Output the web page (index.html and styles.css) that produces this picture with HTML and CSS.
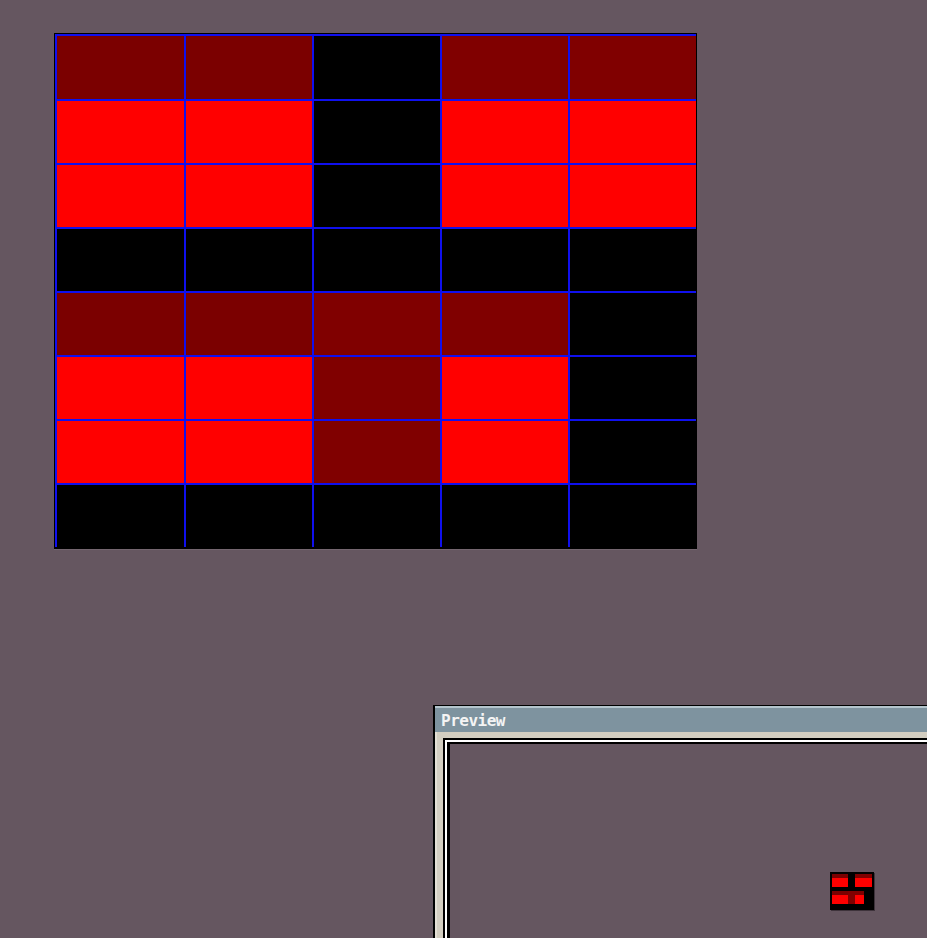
FILE: index.html
```html
<!DOCTYPE html>
<html>
<head>
<meta charset="utf-8">
<title>Grid editor</title>
<link rel="stylesheet" href="styles.css">
</head>
<body>
<div class="board">
  <div class="grid">
    <div class="c d"></div><div class="c d"></div><div class="c k"></div><div class="c m"></div><div class="c m"></div>
    <div class="c r"></div><div class="c r"></div><div class="c k"></div><div class="c r"></div><div class="c r"></div>
    <div class="c r"></div><div class="c r"></div><div class="c k"></div><div class="c r"></div><div class="c r"></div>
    <div class="c k"></div><div class="c k"></div><div class="c k"></div><div class="c k"></div><div class="c k"></div>
    <div class="c d"></div><div class="c d"></div><div class="c m"></div><div class="c m"></div><div class="c k"></div>
    <div class="c r"></div><div class="c r"></div><div class="c m"></div><div class="c r"></div><div class="c k"></div>
    <div class="c r"></div><div class="c r"></div><div class="c m"></div><div class="c r"></div><div class="c k"></div>
    <div class="c k"></div><div class="c k"></div><div class="c k"></div><div class="c k"></div><div class="c k"></div>
  </div>
</div>

<div class="window">
  <div class="titlebar"><span class="title">Preview</span></div>
  <div class="win-body">
    <div class="frame">
      <div class="frame-white">
        <div class="frame-inner"></div>
      </div>
    </div>
  </div>
</div>

<div class="thumb">
  <div class="tgrid">
    <i class="d"></i><i class="d"></i><i class="k"></i><i class="m"></i><i class="m"></i>
    <i class="r"></i><i class="r"></i><i class="k"></i><i class="r"></i><i class="r"></i>
    <i class="r"></i><i class="r"></i><i class="k"></i><i class="r"></i><i class="r"></i>
    <i class="k"></i><i class="k"></i><i class="k"></i><i class="k"></i><i class="k"></i>
    <i class="d"></i><i class="d"></i><i class="m"></i><i class="m"></i><i class="k"></i>
    <i class="r"></i><i class="r"></i><i class="m"></i><i class="r"></i><i class="k"></i>
    <i class="r"></i><i class="r"></i><i class="m"></i><i class="r"></i><i class="k"></i>
    <i class="k"></i><i class="k"></i><i class="k"></i><i class="k"></i><i class="k"></i>
  </div>
</div>
</body>
</html>
```

FILE: styles.css
```css
html, body {
  margin: 0;
  padding: 0;
}
body {
  width: 927px;
  height: 938px;
  overflow: hidden;
  background: #655660;
  position: relative;
  font-family: "DejaVu Sans Mono", "Liberation Mono", monospace;
}

.board {
  position: absolute;
  left: 54px;
  top: 33px;
  width: 643px;
  height: 516px;
  box-sizing: border-box;
  background: #000;
  padding: 1px 1px 2px 1px;
  box-shadow: 0 1px 0 #74666f;
}
.grid {
  display: grid;
  grid-template-columns: 129px 128px 128px 128px 128px;
  grid-template-rows: 65px repeat(7, 64px);
}
.c {
  box-sizing: border-box;
  border-left: 2px solid #1010ee;
  border-top: 2px solid #1010ee;
}
.d { background: #7b0000; }
.m { background: #800000; }
.r { background: #ff0000; }
.k { background: #000000; }

.window {
  position: absolute;
  left: 433px;
  top: 705px;
  width: 520px;
  height: 260px;
  background: #d3cec1;
  border-left: 2px solid #000;
  border-top: 1px solid #000;
  display: flex;
  flex-direction: column;
}
.titlebar {
  height: 24px;
  border-top: 2px solid #b4c5cd;
  background: #7e939f;
  display: flex;
  align-items: center;
  padding-left: 6px;
}
.title {
  color: #f4f4f4;
  font-size: 16px;
  font-weight: bold;
  letter-spacing: -0.5px;
  line-height: 24px;
  padding-top: 1px;
}
.win-body {
  flex: 1;
  padding: 6px 0 0 6px;
  border-left: 2px solid #e3dfd4;
  display: flex;
}
.frame {
  flex: 1;
  background: #000;
  padding: 2px 0 0 2px;
  display: flex;
}
.frame-white {
  flex: 1;
  background: #fff;
  padding: 2px 0 0 2px;
  display: flex;
}
.frame-inner {
  flex: 1;
  border-left: 3px solid #000;
  border-top: 2px solid #000;
  background: #655660;
}

.thumb {
  position: absolute;
  left: 830px;
  top: 872px;
  width: 44px;
  height: 38px;
  box-sizing: border-box;
  background: #000;
  padding: 2px;
  box-shadow: 1px 1px 0 #3e333b;
}
.tgrid {
  display: grid;
  grid-template-columns: 8px 8px 7px 9px 8px;
  grid-template-rows: repeat(8, 4.25px);
}
.tgrid i {
  display: block;
}
```
